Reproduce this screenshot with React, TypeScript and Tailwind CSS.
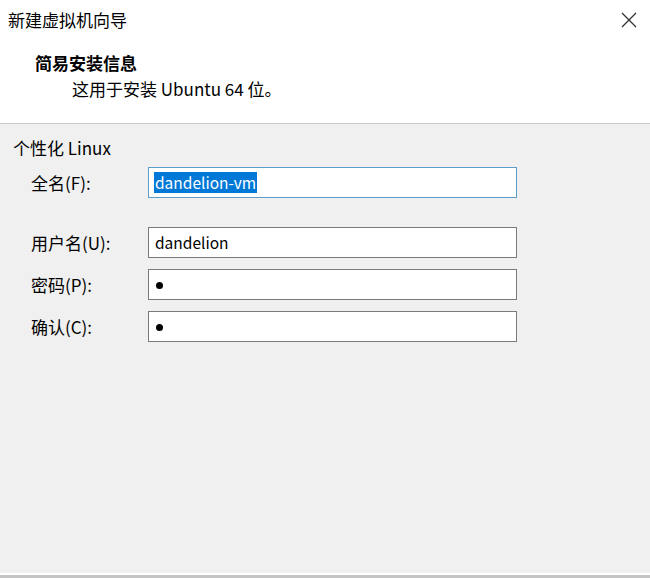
import React from "react";

function Field({ label, children, focused }: { label: string; children: React.ReactNode; focused?: boolean }) {
  return (
    <div className="flex items-center h-[31px]">
      <div className="w-[148px] pl-[31px] text-[17px] leading-[20px] whitespace-nowrap">{label}</div>
      <div
        className={
          "w-[369px] h-[31px] bg-white border flex items-center pl-[5px] " +
          (focused ? "border-[#5d9bc9]" : "border-[#7a7a7a]")
        }
      >
        {children}
      </div>
    </div>
  );
}

function Dot() {
  return <span className="inline-block w-[7px] h-[7px] rounded-full bg-black ml-[2px] mt-[2px]" aria-label="●"></span>;
}

export default function App() {
  return (
    <div
      className="w-[650px] h-[578px] flex flex-col text-black overflow-hidden"
      style={{ fontFamily: '"Noto Sans CJK SC", "Noto Sans", sans-serif' }}
    >
      <div className="bg-white h-[123px] flex flex-col">
        <div className="flex justify-between items-center pt-[9px] pl-[8px] pr-[13px]">
          <div className="text-[17px] leading-[21px]">新建虚拟机向导</div>
          <svg width="16" height="16" viewBox="0 0 16 16" className="text-[#333]">
            <path d="M1 1 L15 15 M15 1 L1 15" stroke="currentColor" strokeWidth="1.3" fill="none" />
          </svg>
        </div>
        <div className="pl-[35px] mt-[23px] text-[17px] leading-[20px] font-bold">简易安装信息</div>
        <div className="pl-[72px] mt-[6px] text-[17px] leading-[20px]">这用于安装 Ubuntu 64 位。</div>
      </div>
      <div className="h-[1px] bg-[#c9c9c9]"></div>
      <div className="flex-1 bg-[#f0f0f0] flex flex-col">
        <div className="pl-[13px] pt-[14px] text-[17px] leading-[20px]">个性化 Linux</div>
        <div className="mt-[9px] flex flex-col">
          <Field label="全名(F):" focused>
            <span className="bg-[#0078d7] text-white text-[15.5px] leading-[21px] px-[1px]">dandelion-vm</span>
          </Field>
          <div className="h-[29px]"></div>
          <Field label="用户名(U):">
            <span className="text-[15.5px] leading-[21px] pl-[1px]">dandelion</span>
          </Field>
          <div className="h-[11px]"></div>
          <Field label="密码(P):">
            <Dot />
          </Field>
          <div className="h-[11px]"></div>
          <Field label="确认(C):">
            <Dot />
          </Field>
        </div>
      </div>
      <div className="h-[2px] bg-white"></div>
      <div className="h-[3px] bg-[#c4c4c4]"></div>
    </div>
  );
}
